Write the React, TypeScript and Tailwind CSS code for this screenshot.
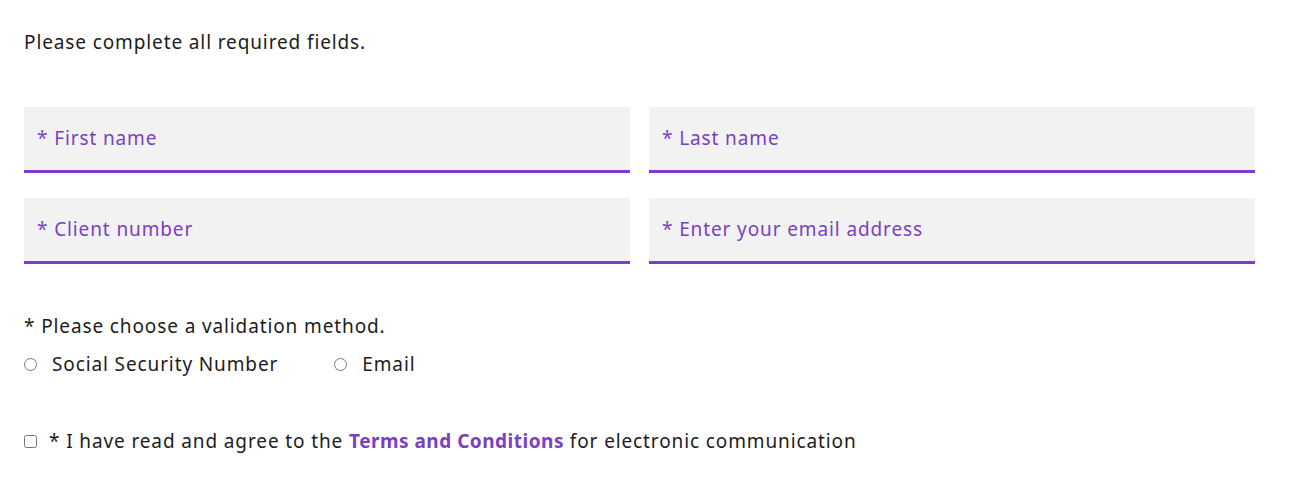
import { useState } from "react";

const fields = [
  "* First name",
  "* Last name",
  "* Client number",
  "* Enter your email address",
];

export default function App() {
  const [method, setMethod] = useState("");
  const [agree, setAgree] = useState(false);

  return (
    <div
      className="min-h-screen bg-white px-6 pt-[29px] tracking-[0.88px] text-[#1c1c1c]"
      style={{ fontFamily: "'Noto Sans', sans-serif" }}
    >
      <p className="text-[19px] leading-[26px]">Please complete all required fields.</p>

      <div className="mt-[52px] grid w-[1231px] grid-cols-2 gap-x-[19px] gap-y-[25px]">
        {fields.map((f) => (
          <div
            key={f}
            className="flex h-[66px] items-center border-b-[3px] border-[#7b3fc4] bg-[#f2f2f2] px-[13px]"
          >
            <span className="text-[19px] text-[#7b3fc4]">{f}</span>
          </div>
        ))}
      </div>

      <p className="mt-[49px] text-[19px] leading-[26px]">* Please choose a validation method.</p>
      <div className="mt-[12px] flex items-center text-[19px] leading-[26px]">
        <label className="flex items-center">
          <input
            type="radio"
            name="method"
            className="m-0 h-[13px] w-[13px]"
            checked={method === "ssn"}
            onChange={() => setMethod("ssn")}
          />
          <span className="ml-[15px]">Social Security Number</span>
        </label>
        <label className="ml-[56px] flex items-center">
          <input
            type="radio"
            name="method"
            className="m-0 h-[13px] w-[13px]"
            checked={method === "email"}
            onChange={() => setMethod("email")}
          />
          <span className="ml-[15px]">Email</span>
        </label>
      </div>

      <label className="mt-[51px] flex items-center text-[19px] leading-[26px]">
        <input
          type="checkbox"
          className="m-0 h-[13px] w-[13px]"
          checked={agree}
          onChange={() => setAgree(!agree)}
        />
        <span className="ml-[12px]">
          * I have read and agree to the{" "}
          <a href="#" className="font-bold tracking-[0.5px] text-[#7b3fc4]">
            Terms and Conditions
          </a>{" "}
          for electronic communication
        </span>
      </label>
    </div>
  );
}
